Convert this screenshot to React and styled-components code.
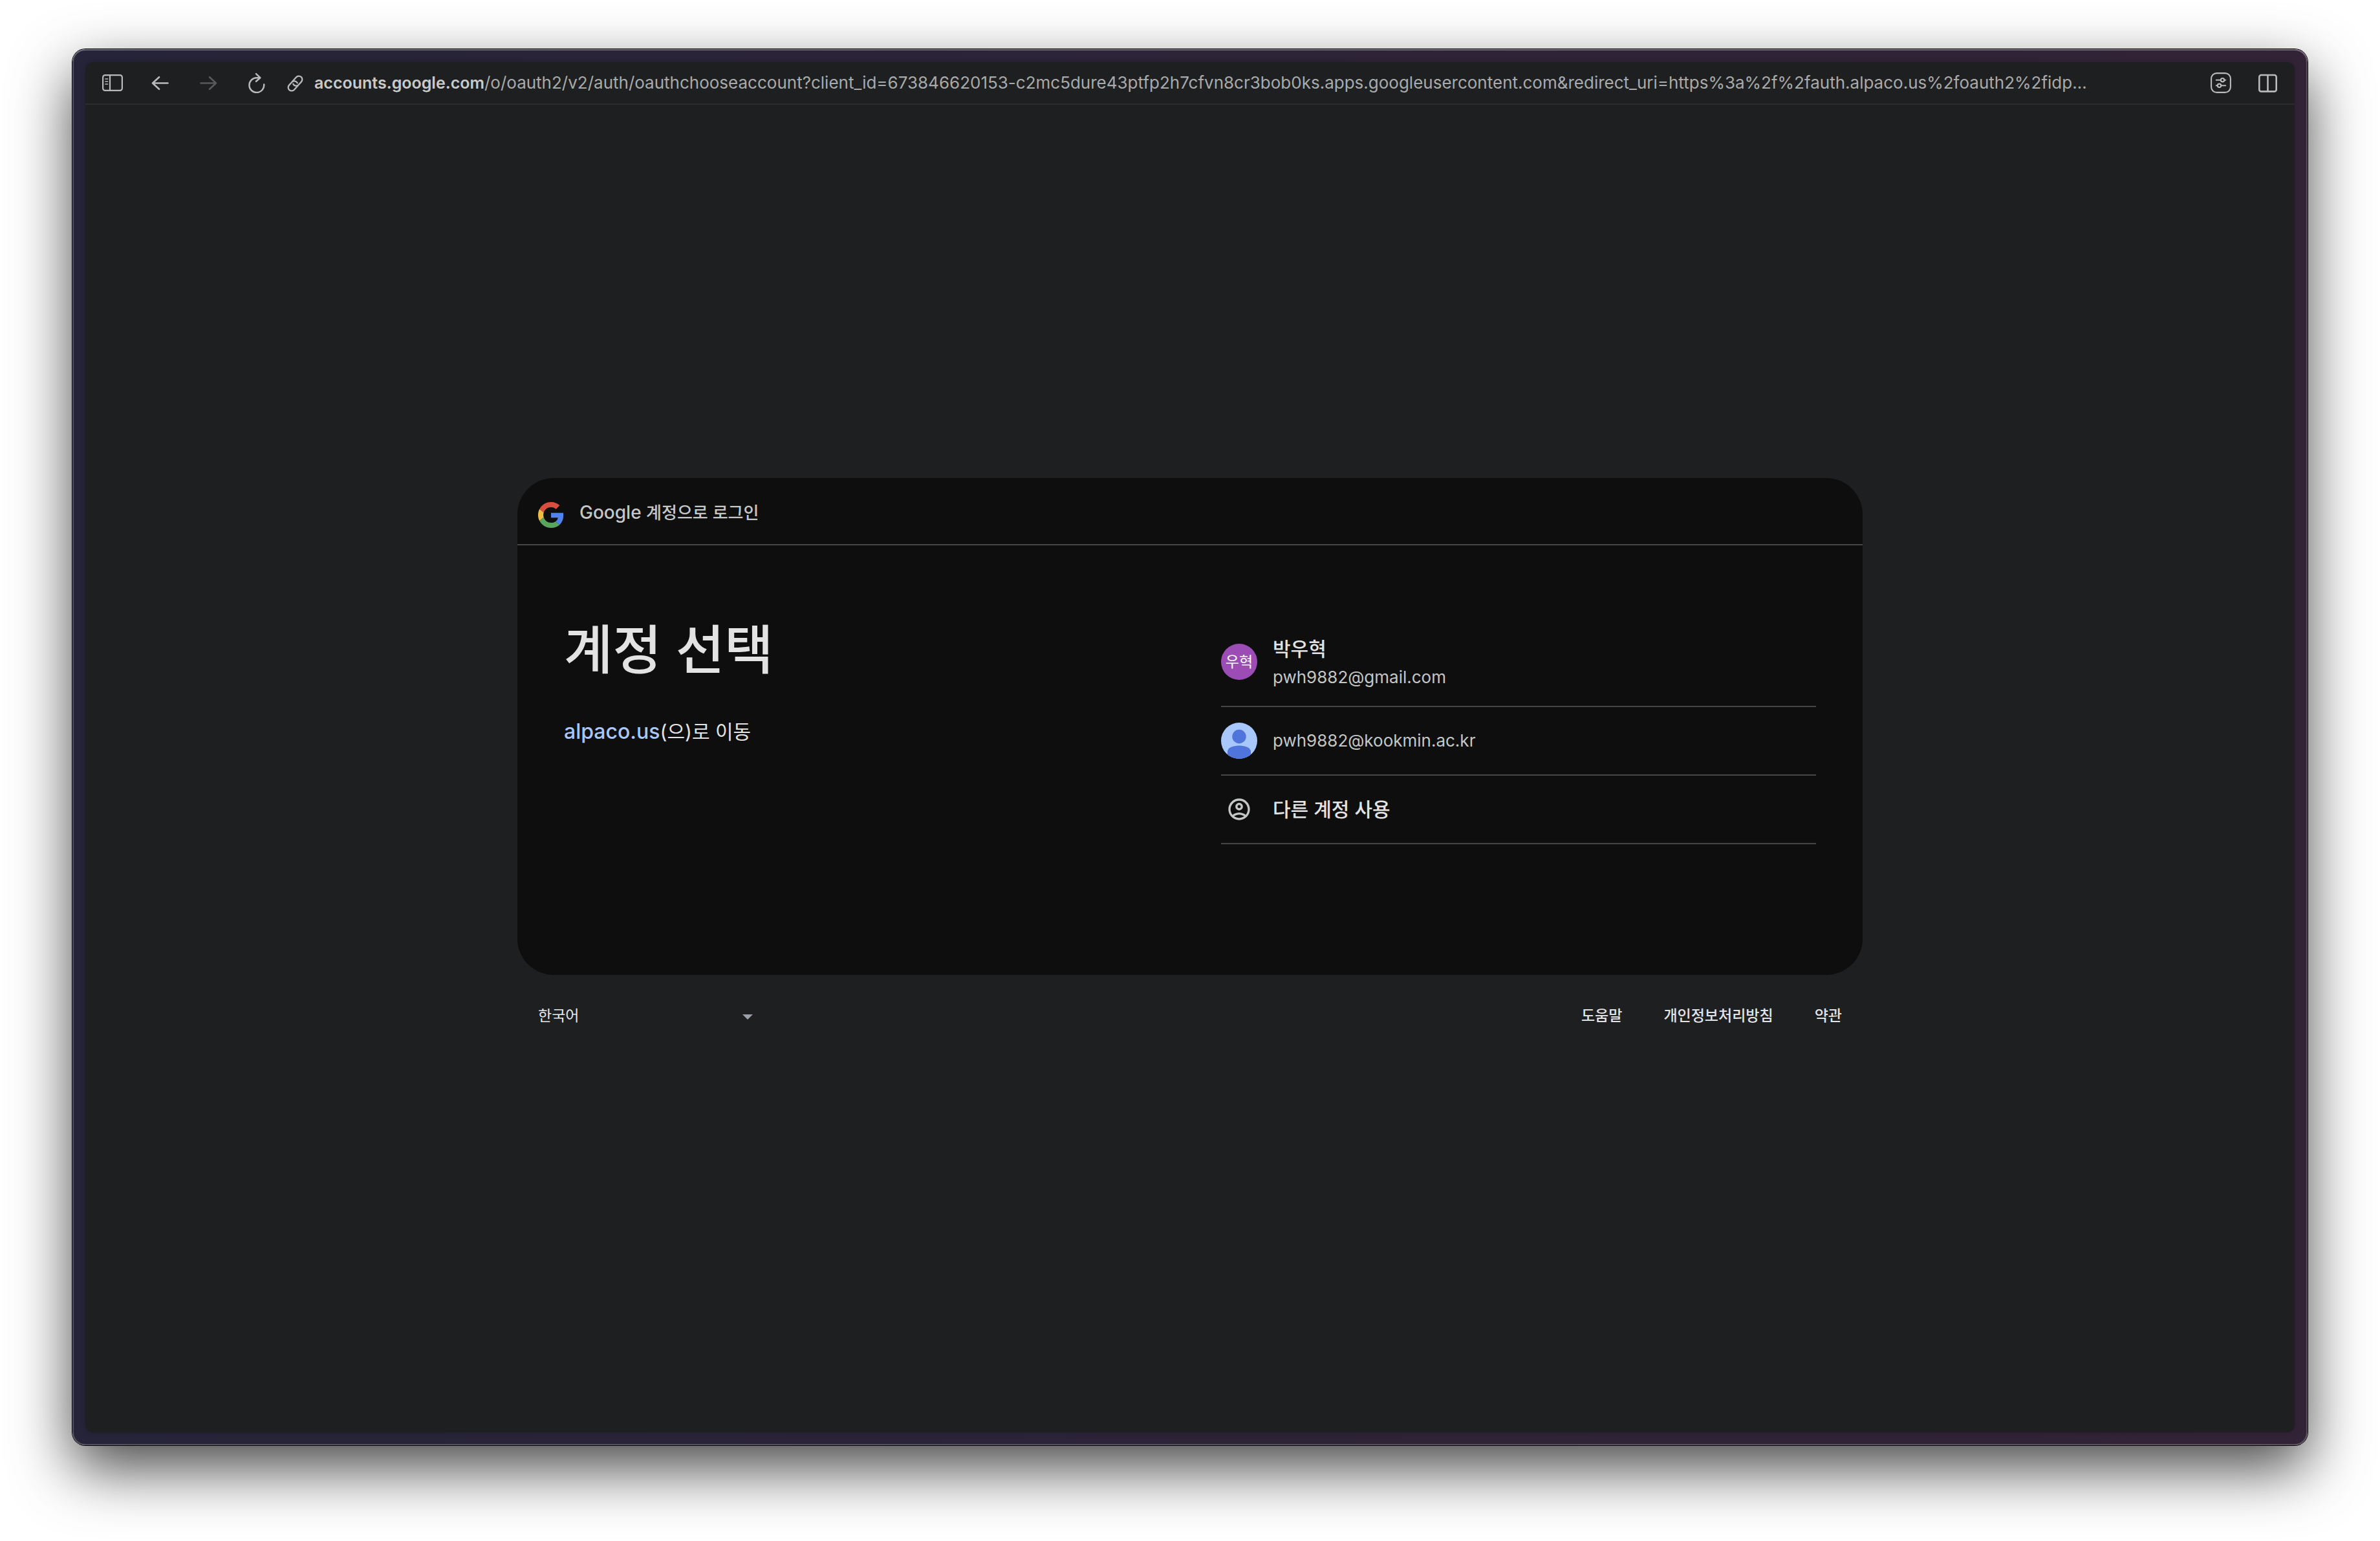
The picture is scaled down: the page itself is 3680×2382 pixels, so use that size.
import React from 'react';
import styled, { createGlobalStyle } from 'styled-components';

const GlobalStyle = createGlobalStyle`
  *, *::before, *::after { box-sizing: border-box; }
  body {
    margin: 0;
    background: #ffffff;
    font-family: Inter, "Noto Sans CJK KR", sans-serif;
    -webkit-font-smoothing: antialiased;
  }
`;

const Desktop = styled.div`
  display: flex;
  min-height: 100vh;
  padding: 76px 112px 148px;
  overflow: hidden;
`;

const WindowFrame = styled.div`
  flex: 1;
  min-width: 0;
  display: flex;
  padding: 20px;
  border-radius: 20px;
  background: linear-gradient(to right, #262438, #332337);
  box-shadow:
    inset 0 0 0 2px rgba(255, 255, 255, 0.2),
    inset 0 2px 0 rgba(255, 255, 255, 0.16),
    0 0 0 1px #000000,
    0 36px 92px rgba(0, 0, 0, 0.72);
`;

const Page = styled.div`
  flex: 1;
  min-width: 0;
  display: flex;
  flex-direction: column;
  border-radius: 12px;
  background: #1e1f20;
  box-shadow: 0 0 10px rgba(0, 0, 0, 0.2);
`;

const Toolbar = styled.header`
  display: flex;
  align-items: center;
  height: 66px;
  padding: 0 26px;
  border-bottom: 2px solid #2b2c2d;
`;

const ToolGroup = styled.div`
  display: flex;
  gap: ${(p) => p.$gap}px;
`;

const ToolButton = styled.button`
  display: flex;
  padding: 0;
  border: 0;
  background: none;
  color: #b9baba;
  cursor: pointer;

  &:disabled {
    color: #58595a;
    cursor: default;
  }

  svg {
    width: 32px;
    height: 32px;
  }
`;

const AddressBar = styled.button`
  flex: 1;
  min-width: 0;
  display: flex;
  align-items: center;
  gap: 14px;
  margin: 0 28px;
  padding: 0;
  border: 0;
  background: none;
  color: #a9aaaa;
  font: 400 26px/32px Inter, sans-serif;
  text-align: left;
  cursor: text;

  svg {
    flex: none;
    width: 32px;
    height: 32px;
    color: #b9baba;
  }
`;

const Url = styled.span`
  overflow: hidden;
  white-space: nowrap;
  text-overflow: ellipsis;
`;

const Domain = styled.span`
  color: #c9caca;
  font-size: 25px;
  font-weight: 600;
`;

const Main = styled.main`
  flex: 1;
  display: flex;
  flex-direction: column;
  align-items: center;
  justify-content: center;
`;

const SignIn = styled.div`
  width: 100%;
  max-width: 2080px;
`;

const Card = styled.section`
  border-radius: 56px;
  background: #0e0e0e;
`;

const CardHeader = styled.div`
  display: flex;
  align-items: center;
  gap: 24px;
  height: 104px;
  padding: 4px 32px 0;
  border-bottom: 2px solid #444746;
  color: #c4c7c5;
  font-size: 26px;
  font-weight: 500;
  line-height: 40px;
`;

const GoogleMark = styled.svg`
  width: 40px;
  height: 40px;
  margin-top: 8px;
`;

const Brand = styled.span`
  font-size: 28px;
`;

const CardBody = styled.div`
  display: grid;
  grid-template-columns: 1fr 1fr;
  align-items: start;
  gap: 96px;
  min-height: 664px;
  padding: 112px 72px;
`;

const Title = styled.h1`
  margin: 0;
  color: #e3e3e3;
  font-size: 82px;
  font-weight: 500;
  line-height: 100px;
`;

const Subtitle = styled.p`
  margin: 52px 0 0;
  color: #e3e3e3;
  font-size: 30px;
  font-weight: 400;
  line-height: 48px;
`;

const AppLink = styled.a`
  color: #a8c7fa;
  font-size: 32px;
  font-weight: 500;
  text-decoration: none;
`;

const AccountList = styled.ul`
  margin: 0;
  padding: 0;
  list-style: none;
`;

const AccountItem = styled.li`
  border-bottom: 2px solid #444746;
`;

const AccountButton = styled.button`
  display: flex;
  align-items: center;
  gap: 24px;
  width: 100%;
  padding: 24px 0;
  border: 0;
  background: none;
  color: #c4c7c5;
  font-family: inherit;
  text-align: left;
  cursor: pointer;
`;

const Avatar = styled.span`
  display: flex;
  flex: none;
  align-items: center;
  justify-content: center;
  width: 56px;
  height: 56px;
  border-radius: 50%;
  overflow: hidden;
  background: ${(p) => p.$color || 'transparent'};
  color: #ffffff;
  font-size: 23px;
  line-height: 32px;

  svg {
    width: ${(p) => p.$icon || 56}px;
    height: ${(p) => p.$icon || 56}px;
  }
`;

const AccountText = styled.span`
  display: flex;
  flex-direction: column;
`;

const AccountName = styled.span`
  color: #e3e3e3;
  font-size: 30px;
  font-weight: 500;
  line-height: 48px;
`;

const AccountEmail = styled.span`
  font-size: 26px;
  line-height: 40px;
`;

const Footer = styled.footer`
  display: flex;
  align-items: center;
  justify-content: space-between;
  height: 130px;
  padding: 0 32px 4px;
`;

const LanguagePicker = styled.div`
  position: relative;
  width: 348px;

  svg {
    position: absolute;
    top: 22px;
    right: 16px;
    width: 16px;
    height: 8px;
    pointer-events: none;
  }
`;

const LanguageSelect = styled.select`
  appearance: none;
  display: block;
  width: 100%;
  height: 48px;
  padding: 0;
  border: 0;
  background: #1e1f20;
  color: #e8eaed;
  font: 400 23px/48px Inter, "Noto Sans CJK KR", sans-serif;
`;

const FooterLinks = styled.nav`
  display: flex;
  gap: 64px;
`;

const FooterLink = styled.a`
  color: #e3e3e3;
  font-size: 23px;
  font-weight: 500;
  line-height: 48px;
  text-decoration: none;
`;

const SidebarIcon = () => (
  <svg viewBox="0 0 32 32" fill="none" stroke="currentColor" strokeWidth="2.2" strokeLinecap="round" aria-hidden="true">
    <rect x="1.1" y="4.1" width="29.8" height="23.8" rx="3.5" />
    <path d="M12 4.5V27.5" />
    <path d="M5 10h3.5M5 14h3.5M5 18h3.5" strokeWidth="1.7" />
  </svg>
);

const ArrowIcon = ({ forward }) => (
  <svg viewBox="0 0 32 32" fill="none" stroke="currentColor" strokeWidth="2.6" strokeLinecap="round" strokeLinejoin="round" aria-hidden="true">
    {forward ? <path d="M4.5 16.5H28M18 7.2L28 16.5L18 25.8" /> : <path d="M27.5 16.5H4M14 7.2L4 16.5L14 25.8" />}
  </svg>
);

const ReloadIcon = () => (
  <svg viewBox="0 0 32 32" fill="none" stroke="currentColor" strokeWidth="2.5" strokeLinecap="round" strokeLinejoin="round" aria-hidden="true">
    <path d="M22 8.2H17A11.4 11.4 0 1 0 28.2 18.500" />
    <path d="M16 2.2L22.3 8.2L16 13.800" />
  </svg>
);

const LinkIcon = () => (
  <svg viewBox="0 0 32 32" fill="none" stroke="currentColor" strokeWidth="2.3" strokeLinecap="round" aria-hidden="true">
    <g transform="rotate(-48 16.5 17)">
      <path d="M17 22.3H8.2A5.3 5.3 0 0 1 8.2 11.7H14.5A5.3 5.3 0 0 1 19.2 19" />
      <path d="M16 11.7H24.8A5.3 5.3 0 0 1 24.8 22.3H18.5A5.3 5.3 0 0 1 13.8 15" />
    </g>
  </svg>
);

const SettingsIcon = () => (
  <svg viewBox="0 0 32 32" fill="none" stroke="currentColor" strokeWidth="2.1" strokeLinecap="round" aria-hidden="true">
    <rect x="1.1" y="1.1" width="29.8" height="29.8" rx="8.5" />
    <path d="M8.8 11.7H15.5M21.5 11.7H23.2M8.8 20.3H10.5M16.5 20.3H23.2" />
    <circle cx="18.5" cy="11.7" r="2.7" />
    <circle cx="13.5" cy="20.3" r="2.7" />
  </svg>
);

const SplitIcon = () => (
  <svg viewBox="0 0 32 32" fill="none" stroke="currentColor" strokeWidth="2.6" aria-hidden="true">
    <rect x="3.3" y="4" width="26.4" height="25.4" rx="3" />
    <path d="M16.5 4V29.4" />
  </svg>
);

const PersonAvatar = () => (
  <svg viewBox="0 0 56 56" aria-hidden="true">
    <rect width="56" height="56" fill="#a8c7fa" />
    <circle cx="28" cy="21.5" r="10.7" fill="#4f74db" />
    <path d="M10 56V45C10 39 18 35.5 28 35.5S46 39 46 45V56Z" fill="#4f74db" />
  </svg>
);

const AccountCircleIcon = () => (
  <svg viewBox="0 0 24 24" fill="#c4c7c5" aria-hidden="true">
    <path d="M12 2C6.48 2 2 6.48 2 12s4.48 10 10 10 10-4.48 10-10S17.52 2 12 2zM7.35 18.5C8.66 17.56 10.26 17 12 17s3.34.56 4.65 1.5C15.34 19.44 13.74 20 12 20s-3.34-.56-4.65-1.5zm10.79-1.38C16.45 15.8 14.32 15 12 15s-4.45.8-6.14 2.12C4.7 15.73 4 13.95 4 12c0-4.42 3.58-8 8-8s8 3.58 8 8c0 1.95-.7 3.73-1.86 5.12z" />
    <path d="M12 6c-1.93 0-3.5 1.57-3.5 3.5S10.07 13 12 13s3.5-1.57 3.5-3.5S13.93 6 12 6zm0 5c-.83 0-1.5-.67-1.5-1.5S11.17 8 12 8s1.5.67 1.5 1.5S12.83 11 12 11z" />
  </svg>
);

const accounts = [
  {
    name: '박우혁',
    email: 'pwh9882@gmail.com',
    avatar: <Avatar $color="#9c4db5">우혁</Avatar>,
  },
  {
    email: 'pwh9882@kookmin.ac.kr',
    avatar: <Avatar><PersonAvatar /></Avatar>,
  },
  {
    name: '다른 계정 사용',
    avatar: <Avatar $icon={40}><AccountCircleIcon /></Avatar>,
  },
];

const footerLinks = ['도움말', '개인정보처리방침', '약관'];

export default function App() {
  return (
    <>
      <GlobalStyle />
      <Desktop>
        <WindowFrame>
          <Page>
            <Toolbar>
              <ToolGroup $gap={42}>
                <ToolButton type="button" aria-label="사이드바"><SidebarIcon /></ToolButton>
                <ToolButton type="button" aria-label="뒤로"><ArrowIcon /></ToolButton>
                <ToolButton type="button" aria-label="앞으로" disabled><ArrowIcon forward /></ToolButton>
                <ToolButton type="button" aria-label="새로고침"><ReloadIcon /></ToolButton>
              </ToolGroup>
              <AddressBar type="button">
                <LinkIcon />
                <Url>
                  <Domain>accounts.google.com</Domain>
                  /o/oauth2/v2/auth/oauthchooseaccount?client_id=673846620153-c2mc5dure43ptfp2h7cfvn8cr3bob0ks.apps.googleusercontent.com&amp;redirect_uri=https%3a%2f%2fauth.alpaco.us%2foauth2%2fidp…
                </Url>
              </AddressBar>
              <ToolGroup $gap={40}>
                <ToolButton type="button" aria-label="사이트 설정"><SettingsIcon /></ToolButton>
                <ToolButton type="button" aria-label="분할 보기"><SplitIcon /></ToolButton>
              </ToolGroup>
            </Toolbar>
            <Main>
              <SignIn>
                <Card>
                  <CardHeader>
                    <GoogleMark viewBox="0 0 48 48" aria-hidden="true">
                      <path fill="#d94f3d" d="M24 9.5c3.54 0 6.71 1.22 9.21 3.6l6.85-6.85C35.9 2.38 30.47 0 24 0 14.62 0 6.51 5.38 2.56 13.22l7.98 6.19C12.43 13.72 17.74 9.5 24 9.5z" />
                      <path fill="#5083ee" d="M46.98 24.55c0-1.57-.15-3.09-.38-4.55H24v9.02h12.94c-.58 2.96-2.26 5.48-4.78 7.18l7.73 6c4.51-4.18 7.09-10.36 7.09-17.65z" />
                      <path fill="#efbd43" d="M10.53 28.59c-.48-1.45-.76-2.99-.76-4.59s.27-3.14.76-4.59l-7.98-6.19C.92 16.46 0 20.12 0 24c0 3.88.92 7.54 2.56 10.78l7.97-6.19z" />
                      <path fill="#58a55c" d="M24 48c6.48 0 11.93-2.13 15.89-5.81l-7.73-6c-2.15 1.45-4.92 2.3-8.16 2.3-6.26 0-11.57-4.22-13.47-9.91l-7.98 6.19C6.51 42.62 14.62 48 24 48z" />
                    </GoogleMark>
                    <span><Brand>Google </Brand>계정으로 로그인</span>
                  </CardHeader>
                  <CardBody>
                    <div>
                      <Title>계정 선택</Title>
                      <Subtitle><AppLink href="#alpaco">alpaco.us</AppLink>(으)로 이동</Subtitle>
                    </div>
                    <AccountList>
                      {accounts.map(({ name, email, avatar }) => (
                        <AccountItem key={email || name}>
                          <AccountButton type="button">
                            {avatar}
                            <AccountText>
                              {name && <AccountName>{name}</AccountName>}
                              {email && <AccountEmail>{email}</AccountEmail>}
                            </AccountText>
                          </AccountButton>
                        </AccountItem>
                      ))}
                    </AccountList>
                  </CardBody>
                </Card>
                <Footer>
                  <LanguagePicker>
                    <LanguageSelect aria-label="언어 변경" defaultValue="ko">
                      <option value="ko">한국어</option>
                    </LanguageSelect>
                    <svg viewBox="0 0 16 8" aria-hidden="true"><path d="M0 0H16L8 8Z" fill="#9aa0a6" /></svg>
                  </LanguagePicker>
                  <FooterLinks>
                    {footerLinks.map((label) => (
                      <FooterLink key={label} href="#footer">{label}</FooterLink>
                    ))}
                  </FooterLinks>
                </Footer>
              </SignIn>
            </Main>
          </Page>
        </WindowFrame>
      </Desktop>
    </>
  );
}
